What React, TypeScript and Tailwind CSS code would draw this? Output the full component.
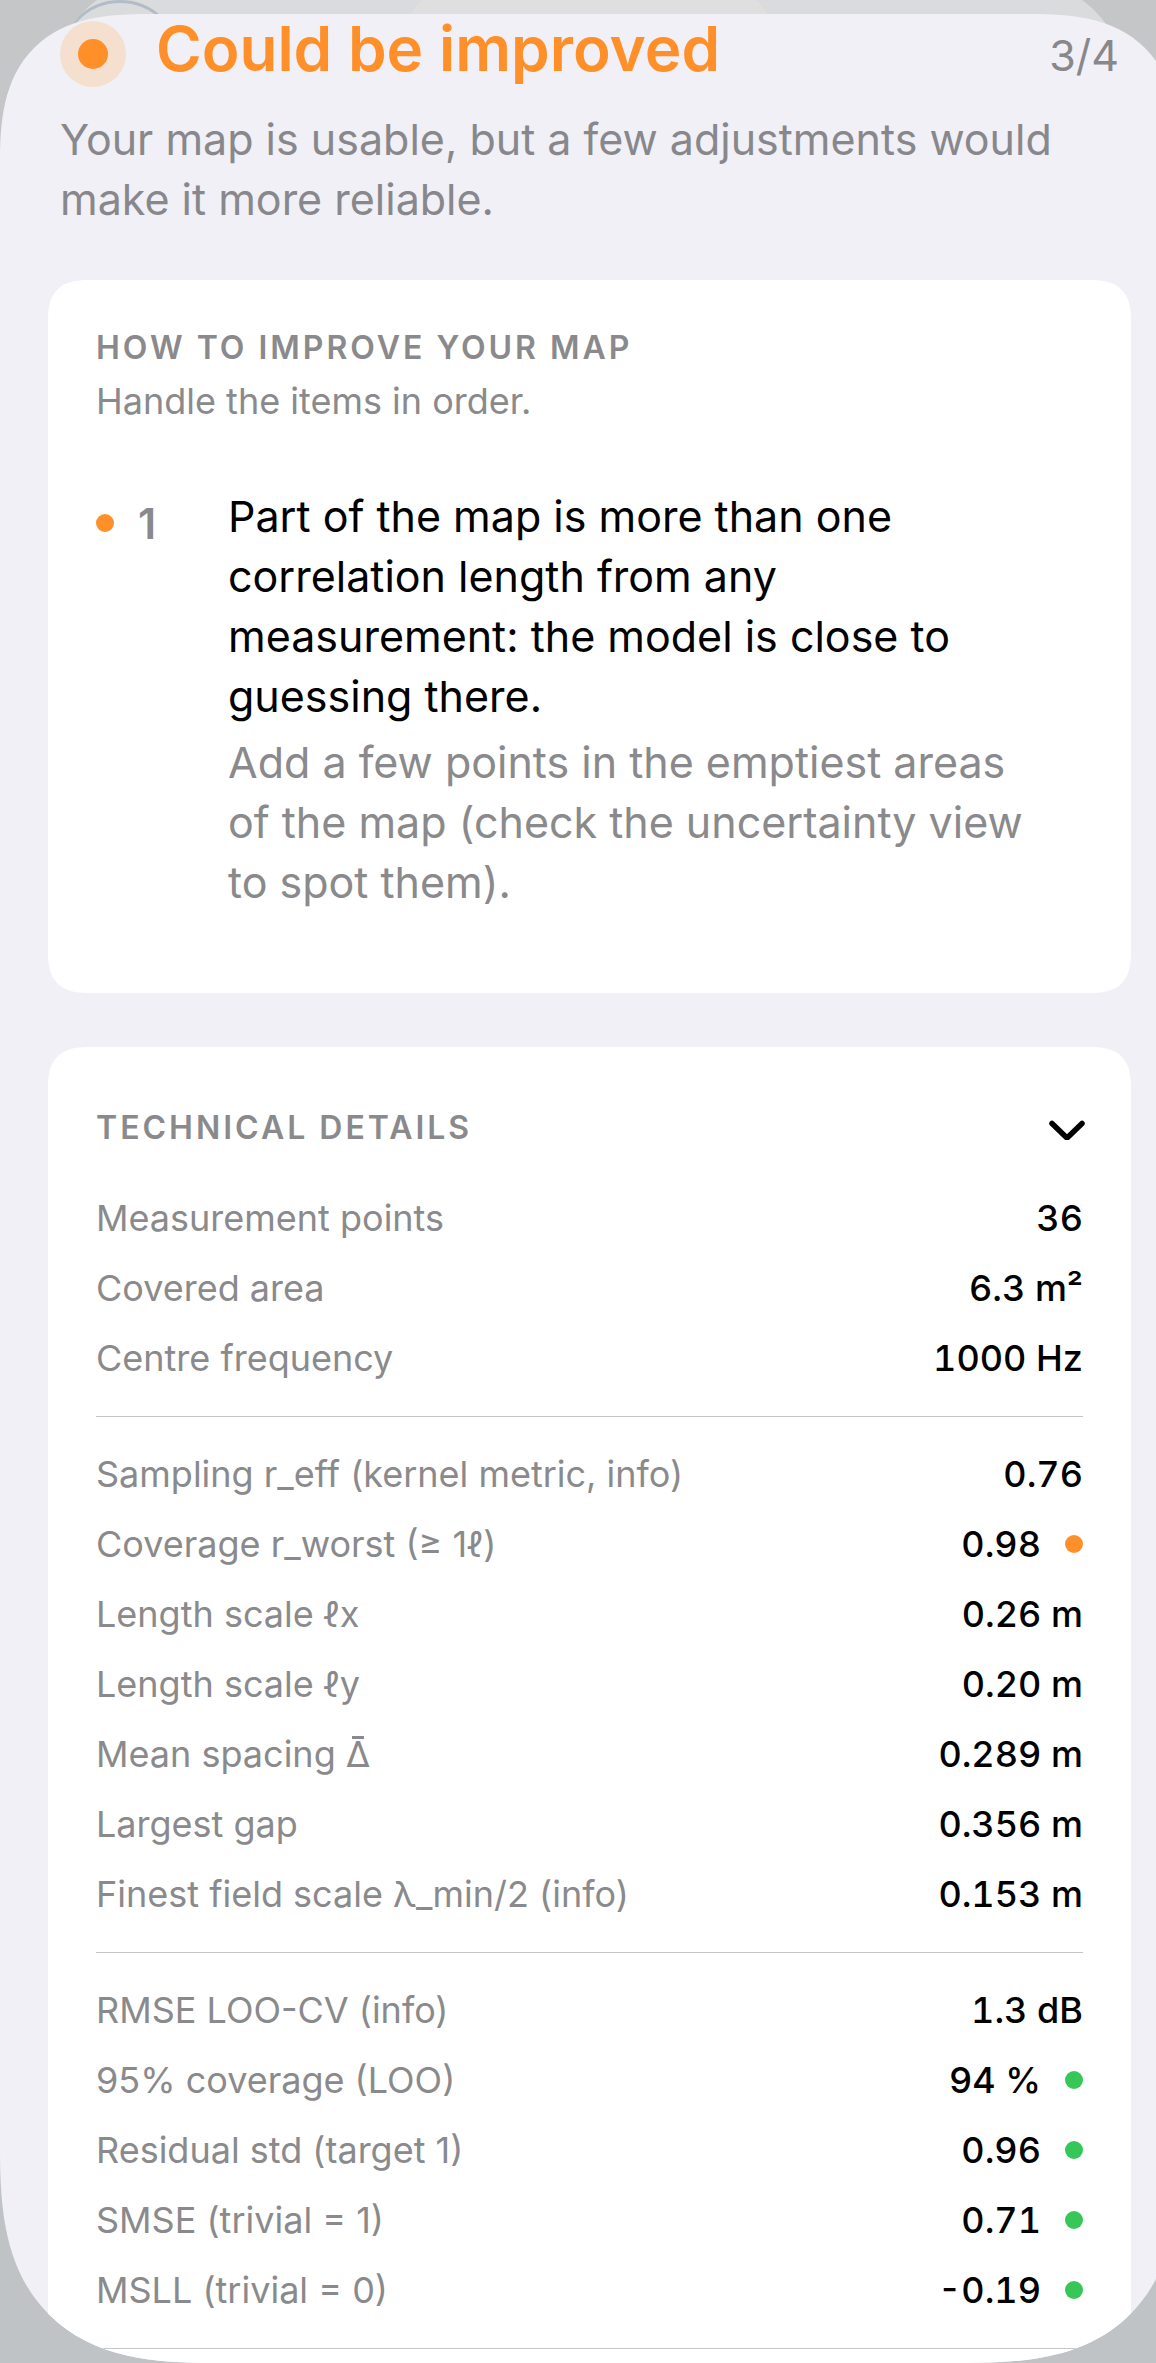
import { useState } from 'react';

type Row = { label: string; value: string; dot?: string };

const ORANGE = 'bg-[#ff8f29]';
const GREEN = 'bg-[#37c759]';

const ITEMS = [
  {
    problem:
      'Part of the map is more than one correlation length from any measurement: the model is close to guessing there.',
    action:
      'Add a few points in the emptiest areas of the map (check the uncertainty view to spot them).',
    dot: ORANGE,
  },
];

const GROUPS: Row[][] = [
  [
    { label: 'Measurement points', value: '36' },
    { label: 'Covered area', value: '6.3 m²' },
    { label: 'Centre frequency', value: '1000 Hz' },
  ],
  [
    { label: 'Sampling r_eff (kernel metric, info)', value: '0.76' },
    { label: 'Coverage r_worst (≥ 1ℓ)', value: '0.98', dot: ORANGE },
    { label: 'Length scale ℓx', value: '0.26 m' },
    { label: 'Length scale ℓy', value: '0.20 m' },
    { label: 'Mean spacing Δ̄', value: '0.289 m' },
    { label: 'Largest gap', value: '0.356 m' },
    { label: 'Finest field scale λ_min/2 (info)', value: '0.153 m' },
  ],
  [
    { label: 'RMSE LOO-CV (info)', value: '1.3 dB' },
    { label: '95% coverage (LOO)', value: '94 %', dot: GREEN },
    { label: 'Residual std (target 1)', value: '0.96', dot: GREEN },
    { label: 'SMSE (trivial = 1)', value: '0.71', dot: GREEN },
    { label: 'MSLL (trivial = 0)', value: '-0.19', dot: GREEN },
  ],
];

function Dot({ color }: { color: string }) {
  return <span className={`w-[18px] h-[18px] rounded-full shrink-0 ${color}`} />;
}

// Combining macrons land beside Greek capitals in most faces, so the bar is its own box
function MathLabel({ text }: { text: string }) {
  return (
    <span>
      {text.split(/(Δ̄)/).map((part, i) =>
        i % 2 ? (
          <span key={i} className="relative inline-block leading-none">
            Δ
            <span className="absolute top-0 inset-x-0 mx-auto w-3 h-[3px] bg-current" />
          </span>
        ) : (
          part
        )
      )}
    </span>
  );
}

function Backdrop() {
  return (
    <div
      aria-hidden="true"
      className="absolute -top-[23px] left-[50px] right-[27px] h-[300px] bg-[#dadbdd] rounded-t-[150px] [corner-shape:superellipse(1.43)] overflow-hidden"
    >
      <div className="absolute top-[23px] left-[9px] w-[122px] h-[122px] rounded-full border-[3px] border-[#b2bcc8]" />
      <div className="absolute top-[12px] left-[355px] w-[368px] h-[120px] rounded-[48px] bg-[#dedfde]" />
    </div>
  );
}

function ImproveCard() {
  return (
    <section className="mt-[51px] bg-white rounded-[42px] [corner-shape:superellipse(1.43)] px-12 pt-[47px] pb-[81px] text-[#8a8a8c]">
      <h2 className="text-[32px] leading-[42px] font-semibold tracking-[3px] uppercase">
        How to improve your map
      </h2>
      <p className="mt-2 text-[36px] leading-[48px]">Handle the items in order.</p>

      <ol className="mt-[61px]">
        {ITEMS.map((item, i) => (
          <li key={item.problem} className="flex items-start text-[43px] leading-[60px]">
            <div className="w-[132px] shrink-0 mt-[7px] flex items-center gap-6">
              <Dot color={item.dot} />
              <span className="font-semibold">{i + 1}</span>
            </div>
            <div className="flex-1 pr-6">
              <p className="text-black">{item.problem}</p>
              <p className="mt-[6px]">{item.action}</p>
            </div>
          </li>
        ))}
      </ol>
    </section>
  );
}

function DetailsCard() {
  const [open, setOpen] = useState(true);

  return (
    <section className="flex-1 bg-white rounded-t-[42px] [corner-shape:superellipse(1.43)] px-12 pt-[60px] pb-[14px]">
      <h2>
        <button
          type="button"
          aria-expanded={open}
          onClick={() => setOpen(!open)}
          className="w-full flex items-center justify-between text-[32px] leading-[42px] font-semibold tracking-[3px] uppercase text-[#8a8a8c]"
        >
          Technical details
          <svg
            viewBox="0 0 38 24"
            className="w-[38px] h-6 -mr-[3px] text-black"
            fill="none"
            stroke="currentColor"
            strokeWidth="5.5"
            strokeLinecap="round"
            strokeLinejoin="round"
            aria-hidden="true"
          >
            <path d="M4 7.5 L19 22 L34 7.5" />
          </svg>
        </button>
      </h2>

      {open && (
        <div className="mt-[34px] text-[36px]">
          {GROUPS.map((rows) => (
            <dl
              key={rows[0].label}
              className="mb-[23px] not-first:pt-[22px] not-first:border-t border-[#c6c6c8]"
            >
              {rows.map((row) => (
                <div key={row.label} className="h-[70px] flex items-center justify-between">
                  <dt className="text-[#8a8a8c]">
                    <MathLabel text={row.label} />
                  </dt>
                  <dd className="flex items-center gap-6 font-medium tabular-nums text-black">
                    {row.value}
                    {row.dot && <Dot color={row.dot} />}
                  </dd>
                </div>
              ))}
            </dl>
          ))}
          <hr className="border-t border-[#c6c6c8]" />
        </div>
      )}
    </section>
  );
}

export default function App() {
  return (
    <div className="relative min-h-screen flex flex-col pt-[14px] overflow-hidden bg-linear-to-b from-[#c5c6c8] to-[#bfc3c6] font-['Inter','Noto_Sans','DejaVu_Sans',sans-serif]">
      <Backdrop />

      {/* Sheet runs slightly past the right edge of the window */}
      <main className="relative flex-1 flex flex-col -mr-[23px] px-12 pt-1 bg-[#f1f0f6] rounded-t-[150px] rounded-b-[215px] [corner-shape:superellipse(1.43)]">
        <header className="px-3 text-[#88888c]">
          <div className="flex items-start">
            <span className="mt-[3px] w-[66px] h-[66px] shrink-0 rounded-full bg-[#f5e0d0] flex items-center justify-center">
              <span className="w-[30px] h-[30px] rounded-full bg-[#ff8f29]" />
            </span>
            <div className="flex-1 ml-[30px] flex items-baseline justify-between">
              <h1 className="text-[62px] leading-[62px] font-semibold text-[#ff8f29]">
                Could be improved
              </h1>
              <span className="text-[43px] leading-[60px]">3/4</span>
            </div>
          </div>
          <p className="mt-[22px] text-[43px] leading-[60px]">
            Your map is usable, but a few adjustments would make it more reliable.
          </p>
        </header>

        <ImproveCard />

        {/* The last card is cut by the sheet's bottom corners */}
        <div className="mt-[54px] -mx-12 px-12 flex-1 flex flex-col overflow-hidden rounded-b-[215px] [corner-shape:superellipse(1.43)]">
          <DetailsCard />
        </div>
      </main>
    </div>
  );
}
